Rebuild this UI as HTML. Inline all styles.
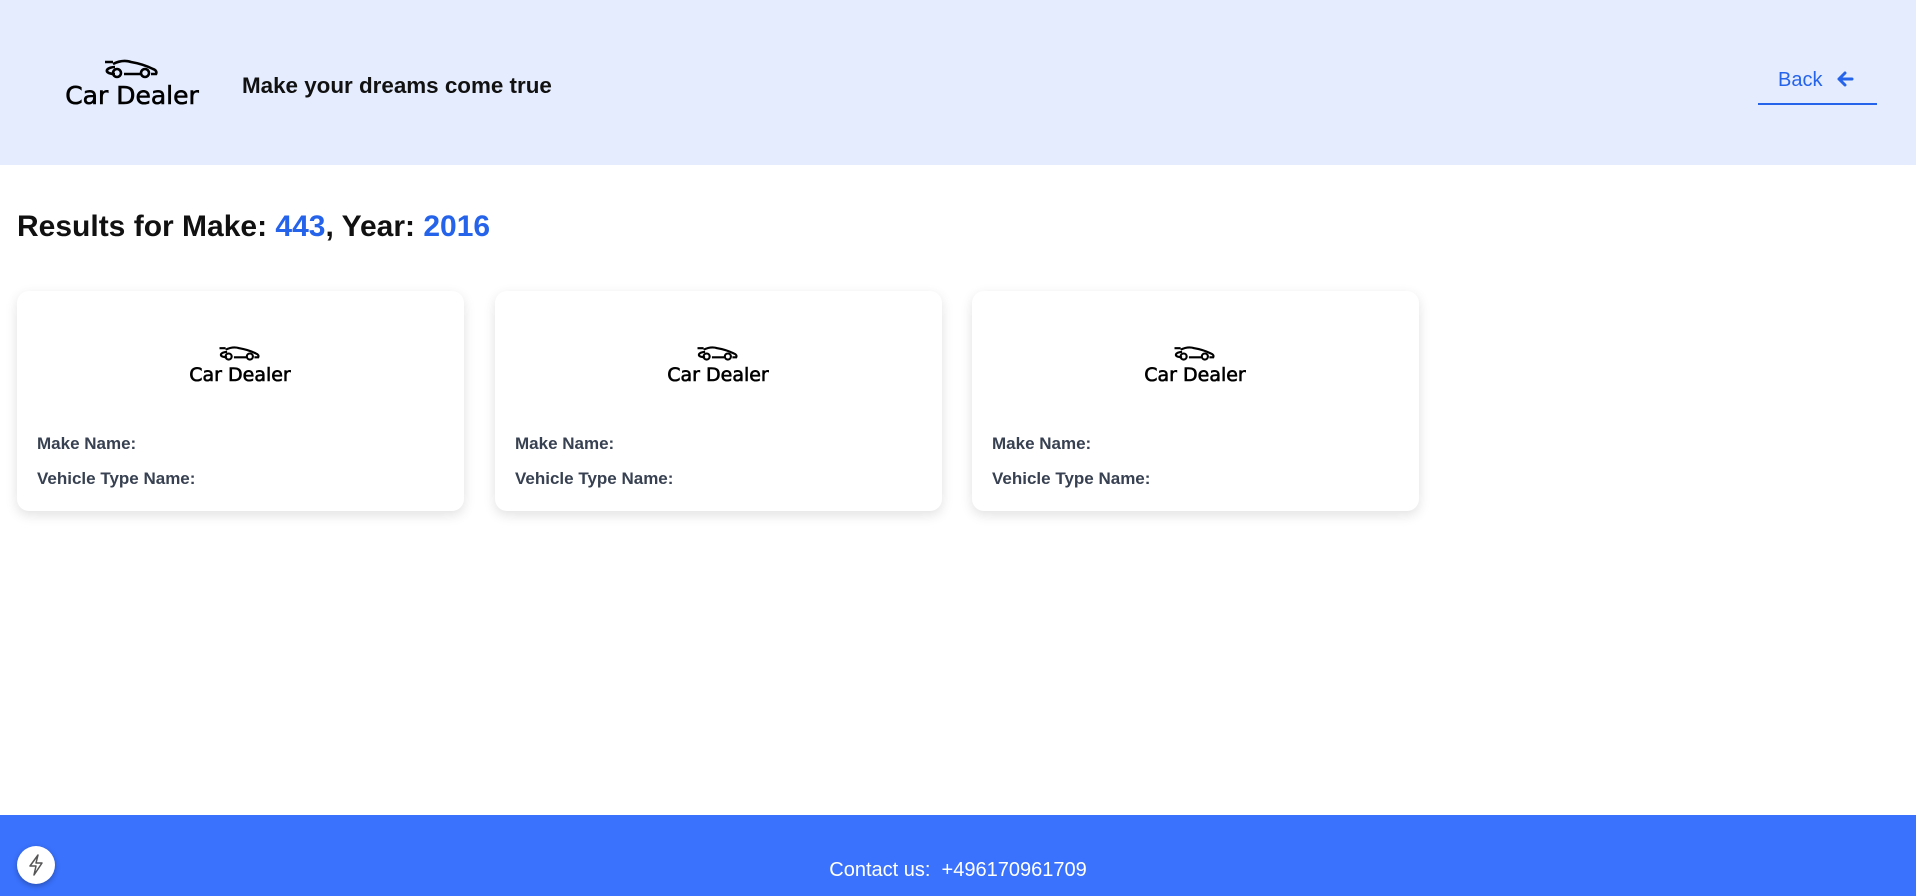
<!DOCTYPE html>
<html><head><meta charset="utf-8"><style>
*{margin:0;padding:0;box-sizing:border-box}
body{width:1916px;height:896px;overflow:hidden;font-family:"Liberation Sans",sans-serif;background:#fff;position:relative}
.hdr{position:absolute;left:0;top:0;width:1916px;height:165px;background:#e5ecfe}
.logo{position:absolute;text-align:center;color:#000}
.logo .t{font-family:"DejaVu Sans","Liberation Sans",sans-serif;white-space:nowrap;-webkit-text-stroke:0.6px #000}
.tag{position:absolute;left:242px;top:73px;font-size:22.4px;font-weight:bold;color:#111}
.back{position:absolute;left:1758px;top:69px;width:119px;height:36px;border-bottom:2px solid #2563eb;color:#2563eb;font-size:20px;padding-left:20px}
h1{position:absolute;left:17px;top:210px;font-size:30px;font-weight:bold;color:#111}
h1 span{color:#2563eb}
.card{position:absolute;top:291px;width:447px;height:220px;background:#fff;border-radius:12px;box-shadow:0 4px 12px rgba(0,0,0,.12)}
.card .l{position:absolute;left:20px;font-size:17px;font-weight:bold;color:#374151}
.ftr{position:absolute;left:0;top:815px;width:1916px;height:81px;background:#3a72fe;color:#fff;font-size:20px;text-align:center;padding-top:44px}
.bolt{position:absolute;left:17px;top:846px;width:38px;height:38px;border-radius:50%;background:#fff;box-shadow:0 2px 6px rgba(0,0,0,.3)}
</style></head><body>
<div class="hdr">
 <div class="logo" style="left:62px;top:58px;width:140px">
  <svg width="58" height="22" viewBox="0 0 58 22"><g fill="none" stroke="#000" stroke-width="2.6"><path d="M2 4h8M10 6c6-3 12-4 18-2 6 1 14 3 22 7 3 1 4 3 3 5h-5M37 16H21M12 16c-4 0-9-1-8-4 1-2 5-3 8-3"/><circle cx="14" cy="15" r="4"/><circle cx="42" cy="15" r="4"/></g></svg>
  <div class="t" style="font-size:25px;line-height:26px;margin-top:-2px">Car Dealer</div>
 </div>
 <div class="tag">Make your dreams come true</div>
 <div class="back">Back <svg width="18" height="16" viewBox="0 0 18 16" style="margin-left:8px;vertical-align:-1px"><path d="M16 8H3M9 2L3 8l6 6" fill="none" stroke="#2563eb" stroke-width="3" stroke-linecap="round" stroke-linejoin="round"/></svg></div>
</div>
<h1>Results for Make: <span>443</span>, Year: <span>2016</span></h1>
<div class="card" style="left:17px"><div class="logo" style="left:168px;top:54px;width:110px"><svg width="44" height="17" viewBox="0 0 58 22"><g fill="none" stroke="#000" stroke-width="2.8"><path d="M2 4h8M10 6c6-3 12-4 18-2 6 1 14 3 22 7 3 1 4 3 3 5h-5M37 16H21M12 16c-4 0-9-1-8-4 1-2 5-3 8-3"/><circle cx="14" cy="15" r="4"/><circle cx="42" cy="15" r="4"/></g></svg><div class="t" style="font-size:19px;line-height:20px;margin-top:-2px">Car Dealer</div></div><div class="l" style="top:143px">Make Name:</div><div class="l" style="top:178px">Vehicle Type Name:</div></div>
<div class="card" style="left:495px"><div class="logo" style="left:168px;top:54px;width:110px"><svg width="44" height="17" viewBox="0 0 58 22"><g fill="none" stroke="#000" stroke-width="2.8"><path d="M2 4h8M10 6c6-3 12-4 18-2 6 1 14 3 22 7 3 1 4 3 3 5h-5M37 16H21M12 16c-4 0-9-1-8-4 1-2 5-3 8-3"/><circle cx="14" cy="15" r="4"/><circle cx="42" cy="15" r="4"/></g></svg><div class="t" style="font-size:19px;line-height:20px;margin-top:-2px">Car Dealer</div></div><div class="l" style="top:143px">Make Name:</div><div class="l" style="top:178px">Vehicle Type Name:</div></div>
<div class="card" style="left:972px"><div class="logo" style="left:168px;top:54px;width:110px"><svg width="44" height="17" viewBox="0 0 58 22"><g fill="none" stroke="#000" stroke-width="2.8"><path d="M2 4h8M10 6c6-3 12-4 18-2 6 1 14 3 22 7 3 1 4 3 3 5h-5M37 16H21M12 16c-4 0-9-1-8-4 1-2 5-3 8-3"/><circle cx="14" cy="15" r="4"/><circle cx="42" cy="15" r="4"/></g></svg><div class="t" style="font-size:19px;line-height:20px;margin-top:-2px">Car Dealer</div></div><div class="l" style="top:143px">Make Name:</div><div class="l" style="top:178px">Vehicle Type Name:</div></div>
<div class="ftr">Contact us:&nbsp; +496170961709</div>
<div class="bolt"><svg width="38" height="38" viewBox="0 0 38 38"><path d="M21 9l-8 11h6l-2 9 8-12h-6z" fill="none" stroke="#555" stroke-width="1.5" stroke-linejoin="round"/></svg></div>
</body></html>
